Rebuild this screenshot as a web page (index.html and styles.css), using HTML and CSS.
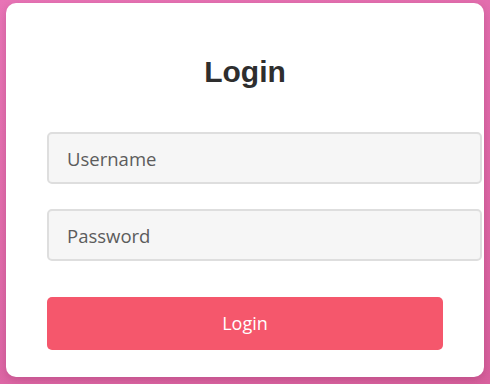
FILE: index.html
```html
<!DOCTYPE html>
<html lang="en">
<head>
<meta charset="utf-8">
<title>Login</title>
<link rel="stylesheet" href="styles.css">
</head>
<body>
  <div class="card">
    <h2 class="title">Login</h2>
    <form class="form">
      <input class="field" type="text" placeholder="Username">
      <input class="field" type="password" placeholder="Password">
      <button class="btn" type="button">Login</button>
    </form>
  </div>
</body>
</html>
```
FILE: styles.css
```css
html, body {
  margin: 0;
  height: 100%;
}
body {
  background: linear-gradient(160deg, #e874b6 0%, #d8609d 100%);
  font-family: "Open Sans", "Liberation Sans", sans-serif;
  padding: 3px 6px 0;
  box-sizing: border-box;
}
.card {
  background: #fff;
  width: 478px;
  height: 374px;
  box-sizing: border-box;
  border-radius: 10px;
  padding: 40px 41px 27px;
  box-shadow: 0 3px 8px rgba(80, 0, 40, 0.18);
}
.title {
  margin: 12px 0 43px;
  text-align: center;
  font-family: "Liberation Sans", Arial, sans-serif;
  font-weight: bold;
  font-size: 30px;
  line-height: 34px;
  color: #2e2e2e;
}
.form {
  display: flex;
  flex-direction: column;
  align-items: flex-start;
}
.field {
  box-sizing: content-box;
  width: 100%;
  height: 48px;
  padding: 0 17px 0 18px;
  margin: 0 0 25px;
  border: 2px solid #dedede;
  border-radius: 5px;
  background: #f6f6f6;
  font-family: "Open Sans", sans-serif;
  font-size: 18.5px;
  color: #555;
  outline: none;
}
.field:last-of-type {
  margin-bottom: 36px;
}
.field::placeholder {
  color: #5c5c5c;
}
.btn {
  width: 100%;
  height: 53px;
  border: none;
  border-radius: 5px;
  background: #f5576c;
  color: #fff;
  font-family: "Open Sans", sans-serif;
  font-size: 18px;
  line-height: 53px;
  padding: 0;
}
```
